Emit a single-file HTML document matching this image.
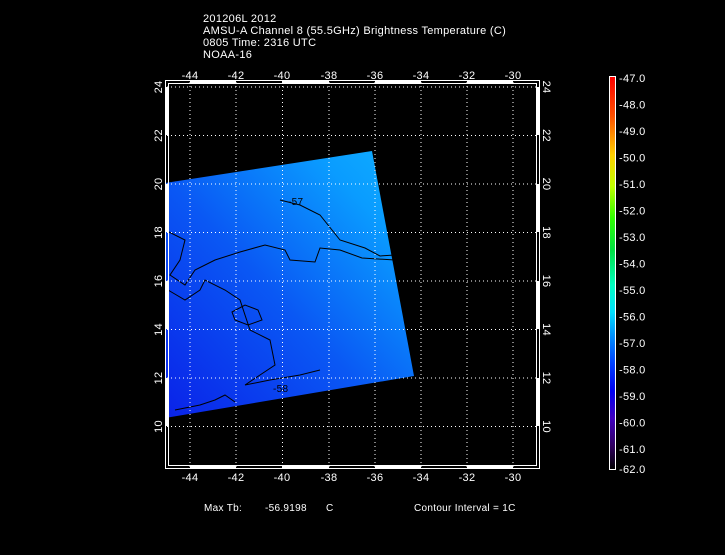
<!DOCTYPE html>
<html><head><style>
body{margin:0;background:#000;width:725px;height:550px;overflow:hidden}
svg text{font-family:"Liberation Sans",sans-serif;fill:#fff;letter-spacing:0.3px}
</style></head><body>
<svg width="725" height="550" viewBox="0 0 725 550" xmlns="http://www.w3.org/2000/svg">
<defs>
<linearGradient id="g" x1="0" y1="1" x2="1" y2="0">
<stop offset="0" stop-color="#0a22e8"/><stop offset="0.45" stop-color="#0a58f4"/><stop offset="0.8" stop-color="#0a9cff"/><stop offset="1" stop-color="#10b0ff"/>
</linearGradient>
<linearGradient id="cb" x1="0" y1="0" x2="0" y2="1">
<stop offset="0" stop-color="#ff0000"/><stop offset="0.1" stop-color="#ff5000"/><stop offset="0.2" stop-color="#ffd000"/><stop offset="0.28" stop-color="#c0ff00"/><stop offset="0.36" stop-color="#30ff00"/><stop offset="0.44" stop-color="#00e040"/><stop offset="0.53" stop-color="#00ffc0"/><stop offset="0.6" stop-color="#00e0ff"/><stop offset="0.66" stop-color="#0090ff"/><stop offset="0.73" stop-color="#0040ff"/><stop offset="0.8" stop-color="#0000f0"/><stop offset="0.87" stop-color="#4000c0"/><stop offset="0.94" stop-color="#300060"/><stop offset="1" stop-color="#000000"/>
</linearGradient>
</defs>
<g font-size="11">
<text x="203" y="22">201206L 2012</text>
<text x="203" y="34">AMSU-A Channel 8 (55.5GHz) Brightness Temperature (C)</text>
<text x="203" y="46">0805 Time: 2316 UTC</text>
<text x="203" y="58">NOAA-16</text>
</g>
<polygon points="165,183 372,151 414,376 165,418" fill="url(#g)"/>
<g fill="none" stroke="#000" stroke-width="1">
<path d="M280,200 L300,205 L320,215 L340,240 L365,248 L380,256 L395,255"/>
<path d="M165,230 L185,240 L180,260 L170,275 L185,285 L195,270 L215,260 L240,252 L265,245 L285,250 L290,260 L315,262 L320,248 L340,250 L362,258 L395,260"/>
<path d="M168,290 L185,300 L200,290 L205,280 L225,290 L240,300 L250,330 L270,340 L275,365 L260,375 L245,385 L270,380 L300,375 L320,370"/>
<path d="M232,312 L245,305 L258,310 L262,320 L248,325 L235,320 Z"/>
<path d="M175,410 L200,405 L215,400 L225,395 L235,402"/>
</g>
<text x="288" y="205" font-size="10" style="fill:#000">-57</text>
<text x="273" y="392" font-size="10" style="fill:#000">-58</text>
<g stroke="#fff" stroke-width="1" stroke-dasharray="1,3">
<line x1="190" y1="82" x2="190" y2="467"/><line x1="236" y1="82" x2="236" y2="467"/><line x1="282.5" y1="82" x2="282.5" y2="467"/><line x1="329" y1="82" x2="329" y2="467"/><line x1="375" y1="82" x2="375" y2="467"/><line x1="421" y1="82" x2="421" y2="467"/><line x1="467" y1="82" x2="467" y2="467"/><line x1="513" y1="82" x2="513" y2="467"/>
<line x1="167" y1="87" x2="538" y2="87"/><line x1="167" y1="135.5" x2="538" y2="135.5"/><line x1="167" y1="184" x2="538" y2="184"/><line x1="167" y1="232.5" x2="538" y2="232.5"/><line x1="167" y1="281" x2="538" y2="281"/><line x1="167" y1="329.5" x2="538" y2="329.5"/><line x1="167" y1="378" x2="538" y2="378"/><line x1="167" y1="426.5" x2="538" y2="426.5"/>
</g>
<rect x="165.5" y="80.5" width="374" height="388" fill="none" stroke="#fff"/>
<rect x="168.5" y="83.5" width="368" height="382" fill="none" stroke="#fff"/>
<g stroke="#fff" stroke-width="3">
<line x1="190" y1="467" x2="236" y2="467"/><line x1="282" y1="467" x2="329" y2="467"/><line x1="375" y1="467" x2="421" y2="467"/><line x1="467" y1="467" x2="513" y2="467"/>
<line x1="190" y1="82" x2="236" y2="82"/><line x1="282" y1="82" x2="329" y2="82"/><line x1="375" y1="82" x2="421" y2="82"/><line x1="467" y1="82" x2="513" y2="82"/>
<line x1="167" y1="87" x2="167" y2="135"/><line x1="167" y1="184" x2="167" y2="232"/><line x1="167" y1="281" x2="167" y2="329"/><line x1="167" y1="378" x2="167" y2="426"/>
<line x1="538" y1="87" x2="538" y2="135"/><line x1="538" y1="184" x2="538" y2="232"/><line x1="538" y1="281" x2="538" y2="329"/><line x1="538" y1="378" x2="538" y2="426"/>
</g>
<g font-size="11" text-anchor="middle">
<text x="190" y="79">-44</text><text x="236" y="79">-42</text><text x="282" y="79">-40</text><text x="329" y="79">-38</text><text x="375" y="79">-36</text><text x="421" y="79">-34</text><text x="467" y="79">-32</text><text x="513" y="79">-30</text>
<text x="190" y="481">-44</text><text x="236" y="481">-42</text><text x="282" y="481">-40</text><text x="329" y="481">-38</text><text x="375" y="481">-36</text><text x="421" y="481">-34</text><text x="467" y="481">-32</text><text x="513" y="481">-30</text>
</g>
<g font-size="11" text-anchor="middle">
<text transform="translate(162,87) rotate(-90)">24</text><text transform="translate(162,135.5) rotate(-90)">22</text><text transform="translate(162,184) rotate(-90)">20</text><text transform="translate(162,232.5) rotate(-90)">18</text><text transform="translate(162,281) rotate(-90)">16</text><text transform="translate(162,329.5) rotate(-90)">14</text><text transform="translate(162,378) rotate(-90)">12</text><text transform="translate(162,426.5) rotate(-90)">10</text>
<text transform="translate(543,87) rotate(90)">24</text><text transform="translate(543,135.5) rotate(90)">22</text><text transform="translate(543,184) rotate(90)">20</text><text transform="translate(543,232.5) rotate(90)">18</text><text transform="translate(543,281) rotate(90)">16</text><text transform="translate(543,329.5) rotate(90)">14</text><text transform="translate(543,378) rotate(90)">12</text><text transform="translate(543,426.5) rotate(90)">10</text>
</g>
<rect x="609.5" y="76.5" width="6" height="393" fill="url(#cb)" stroke="#fff"/>
<g font-size="11">
<text x="619" y="82">-47.0</text><text x="619" y="108.5">-48.0</text><text x="619" y="135">-49.0</text><text x="619" y="161.5">-50.0</text><text x="619" y="188">-51.0</text><text x="619" y="214.5">-52.0</text><text x="619" y="241">-53.0</text><text x="619" y="267.5">-54.0</text><text x="619" y="294">-55.0</text><text x="619" y="320.5">-56.0</text><text x="619" y="347">-57.0</text><text x="619" y="373.5">-58.0</text><text x="619" y="400">-59.0</text><text x="619" y="426.5">-60.0</text><text x="619" y="453">-61.0</text><text x="619" y="473">-62.0</text>
</g>
<g font-size="10">
<text x="204" y="511">Max Tb:</text><text x="265" y="511">-56.9198</text><text x="326" y="511">C</text>
<text x="414" y="511">Contour Interval = 1C</text>
</g>
</svg>
</body></html>
